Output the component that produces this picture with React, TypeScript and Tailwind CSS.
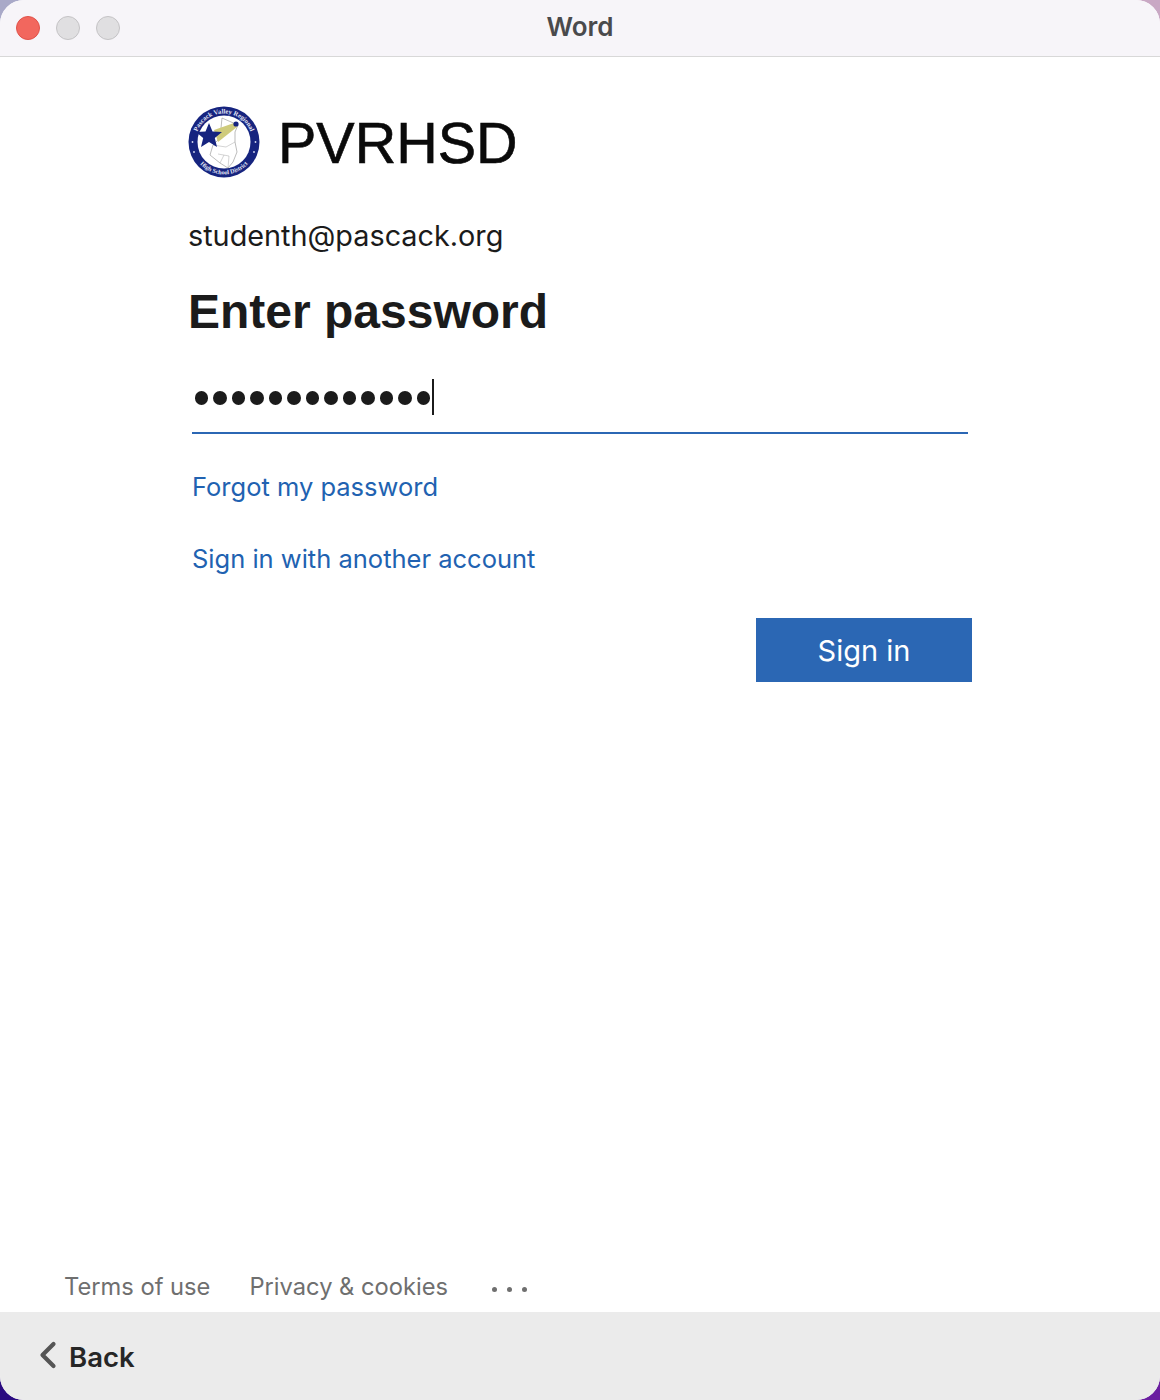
import React from 'react';
import { ChevronLeft } from 'lucide-react';

function DistrictLogo() {
  return (
    <svg viewBox="0 0 72 72" className="w-[72px] h-[72px] shrink-0">
      <defs>
        <path id="ring-top" d="M7.5 36 A28.5 28.5 0 0 1 64.5 36" />
        <path id="ring-bottom" d="M3.6 36 A32.4 32.4 0 0 0 68.4 36" />
      </defs>
      <circle cx="36" cy="36" r="35.5" fill="#16247f" />
      <circle cx="36" cy="36" r="26.5" fill="#ffffff" />
      <text fontSize="6.6" fontWeight="700" fill="#e4e6f5" fontFamily="Liberation Serif, serif" textAnchor="middle">
        <textPath href="#ring-top" startOffset="50%">Pascack Valley Regional</textPath>
      </text>
      <text fontSize="6.2" fontWeight="700" fill="#e4e6f5" fontFamily="Liberation Serif, serif" textAnchor="middle">
        <textPath href="#ring-bottom" startOffset="50%">High School District</textPath>
      </text>
      <g fill="#d5d9f0">
        <circle cx="4.5" cy="36" r="0.9" />
        <circle cx="6" cy="46" r="0.9" />
        <circle cx="67.5" cy="36" r="0.9" />
        <circle cx="66" cy="46" r="0.9" />
      </g>
      {/* state outline */}
      <path
        d="M34 12 L50 19 L47 26 L47 36 L49 46 L45 56 L40 62 L32 57 L22 49 L25 39 L32 32 Z"
        fill="#ffffff"
        stroke="#8e8e8e"
        strokeWidth="0.6"
      />
      <path d="M25 39 L38 41 L47 36 M30 48 L41 50 L40 62 M32 57 L36 49" fill="none" stroke="#a8a8a8" strokeWidth="0.5" />
      {/* shooting star trail */}
      <path d="M26 24 L46 17 L49 21 L30 36 Z" fill="#cfcb7c" />
      <circle cx="48" cy="18" r="2.6" fill="#16247f" />
      <polygon points="21,17 24.5,25.5 34,26 26.8,32 29,41 21,36 13,41 15.2,32 8,26 17.5,25.5" fill="#16247f" />
    </svg>
  );
}

export default function App() {
  return (
    <div className="w-[1160px] h-[1400px] bg-[conic-gradient(#c9a8c4_0_25%,#6a1ea0_25%_50%,#2a0a80_50%_75%,#a9a9c8_75%_100%)] font-['Inter',sans-serif]">
      <div className="h-full flex flex-col rounded-[24px] overflow-hidden bg-white">
        {/* Title bar */}
        <div className="relative h-[57px] shrink-0 bg-[#f7f5f9] border-b border-[#d8d8d8] flex items-center justify-center">
          <div className="absolute left-4 top-[16px] flex gap-4">
            <span className="w-6 h-6 rounded-full bg-[#f2675e] border border-[#e0524a]"></span>
            <span className="w-6 h-6 rounded-full bg-[#e0dfe1] border border-[#c4c3c5]"></span>
            <span className="w-6 h-6 rounded-full bg-[#e0dfe1] border border-[#c4c3c5]"></span>
          </div>
          <span className="text-[26px] font-semibold text-[#4a4a4c] leading-none -mt-[2px]">Word</span>
        </div>

        {/* Sign in form */}
        <div className="flex-1 flex flex-col pl-[188px] pr-[188px]">
          <div className="flex items-center mt-[49px] h-[72px]">
            <DistrictLogo />
            <span className="ml-[18px] mt-[3px] text-[57.5px] leading-none text-[#0a0a0a] font-['Liberation_Sans',sans-serif] [-webkit-text-stroke:0.6px_#0a0a0a]">
              PVRHSD
            </span>
          </div>

          <div className="mt-[38px] text-[28.8px] leading-[40px] text-[#1b1b1b]">studenth@pascack.org</div>

          <h1 className="mt-[26px] text-[48px] leading-[60px] font-bold text-[#1b1b1b] font-['Liberation_Sans',sans-serif]">
            Enter password
          </h1>

          <div className="ml-1 mr-[4px] mt-[27px] h-[65px] border-b-2 border-[#2b67b4] flex items-start pt-[10px]">
            <div className="flex items-center h-9">
              <div className="flex gap-[5.2px] pl-[3px] mt-[2px]">
                {Array.from({ length: 13 }).map((_, i) => (
                  <span key={i} className="w-[13.3px] h-[13.3px] rounded-full bg-[#1b1b1b]"></span>
                ))}
              </div>
              <span className="ml-[2px] w-[2px] h-9 bg-[#1b1b1b]"></span>
            </div>
          </div>

          <a className="ml-1 mt-[35px] text-[25.5px] leading-[36px] text-[#2162b1]">Forgot my password</a>
          <a className="ml-1 mt-[36px] text-[25.5px] leading-[36px] text-[#2162b1]">Sign in with another account</a>

          <div className="flex justify-end mt-[41px]">
            <button className="w-[216px] h-[64px] pt-[2px] bg-[#2b67b4] text-white text-[29px]">Sign in</button>
          </div>
        </div>

        {/* Footer links */}
        <div className="flex items-center gap-[39px] pl-[64px] h-[50px] text-[23.7px] text-[#6f6f6f]">
          <span>Terms of use</span>
          <span>Privacy &amp; cookies</span>
          <span className="flex gap-[10px] pt-[4px] ml-[5px]">
            <span className="w-[5px] h-[5px] rounded-full bg-[#6f6f6f]"></span>
            <span className="w-[5px] h-[5px] rounded-full bg-[#6f6f6f]"></span>
            <span className="w-[5px] h-[5px] rounded-full bg-[#6f6f6f]"></span>
          </span>
        </div>

        {/* Back bar */}
        <div className="h-[88px] shrink-0 bg-[#ebebeb] flex items-center pl-[26px]">
          <ChevronLeft className="w-11 h-11 text-[#555555] -mt-[3px]" strokeWidth={2.3} />
          <span className="-ml-[1px] mt-[3px] text-[27.5px] font-semibold text-[#262626]">Back</span>
        </div>
      </div>
    </div>
  );
}
